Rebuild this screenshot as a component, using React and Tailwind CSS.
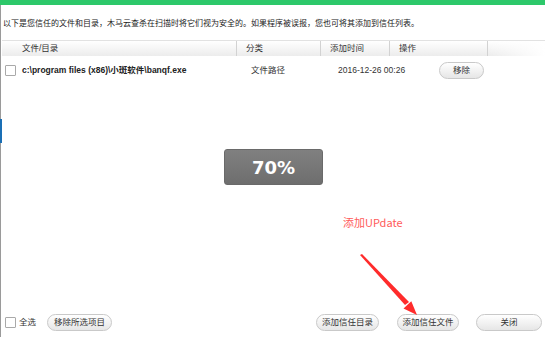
import React from 'react';

function Checkbox() {
  return <span className="w-[11px] h-[11px] border border-[#a9a9a9] bg-white rounded-[1px] shrink-0" />;
}

function PillButton({ children, className = '' }) {
  return (
    <button
      type="button"
      className={`h-[17px] rounded-full border border-[#c9c9c9] bg-gradient-to-b from-white to-[#e6e6e6] text-[8.5px] text-[#333] leading-none flex items-center justify-center ${className}`}
    >
      {children}
    </button>
  );
}

function App() {
  return (
    <div className="w-[545px] h-[337px] bg-white relative overflow-hidden font-['Liberation_Sans','Noto_Sans_CJK_SC',sans-serif] text-[#333]">
      <div className="h-[5px] bg-[#2dc86a]" />
      <div className="flex h-[332px]">
        {/* left window edge */}
        <div className="w-[2px] flex flex-col">
          <div className="h-[114px] w-px bg-[#9a9a9a]" />
          <div className="h-[24px] w-[2px] bg-[#1a6fb5]" />
          <div className="flex-1 w-px bg-[#9a9a9a]" />
        </div>

        <div className="flex-1 flex flex-col">
          <div className="h-[35px] pl-[1px] pt-[3px] flex items-center text-[8px] text-[#222] whitespace-nowrap">
            以下是您信任的文件和目录，木马云查杀在扫描时将它们视为安全的。如果程序被误报，您也可将其添加到信任列表。
          </div>

          {/* table header */}
          <div className="h-[16px] flex text-[8.5px] text-[#333] border-t border-[#e2e2e2] bg-gradient-to-b from-white to-[#ececec]">
            <div className="w-[235px] pl-[20px] flex items-center border-r border-[#d2d2d2]">文件/目录</div>
            <div className="w-[84px] pl-[9px] flex items-center border-r border-[#d2d2d2]">分类</div>
            <div className="w-[69px] pl-[9px] flex items-center border-r border-[#d2d2d2]">添加时间</div>
            <div className="w-[98px] pl-[9px] flex items-center border-r border-[#d2d2d2]">操作</div>
            <div className="flex-1 bg-gradient-to-r from-transparent to-white" />
          </div>

          {/* row */}
          <div className="h-[28px] flex items-center text-[8.5px] whitespace-nowrap">
            <div className="w-[236px] pl-[3px] flex items-center gap-[6px]">
              <Checkbox />
              <span className="font-bold text-[#222]">{"c:\\program files (x86)\\小斑软件\\banqf.exe"}</span>
            </div>
            <div className="w-[84px] pl-[13px]">文件路径</div>
            <div className="w-[69px] pl-[16px] overflow-visible">2016-12-26 00:26</div>
            <div className="pl-[48px]">
              <PillButton className="w-[45px]">移除</PillButton>
            </div>
          </div>

          <div className="flex justify-center mt-[65px]">
            <div className="w-[99px] h-[36px] rounded-[3px] border border-[#6a6a6a] bg-gradient-to-b from-[#808080] to-[#6e6e6e] flex items-center justify-center text-white font-bold text-[18px] font-['DejaVu_Sans',sans-serif]">
              70%
            </div>
          </div>

          <div className="flex-1" />

          {/* bottom bar */}
          <div className="h-[26px] pb-[3px] flex items-center text-[8.5px]">
            <div className="pl-[3px] flex items-center gap-[3px]">
              <Checkbox />
              <span>全选</span>
            </div>
            <PillButton className="w-[65px] ml-[11px]">移除所选项目</PillButton>
            <div className="flex-1" />
            <PillButton className="w-[63px]">添加信任目录</PillButton>
            <PillButton className="w-[62px] ml-[18px]">添加信任文件</PillButton>
            <PillButton className="w-[66px] ml-[17px] mr-[3px]">关闭</PillButton>
          </div>
        </div>
      </div>

      {/* annotation */}
      <div className="absolute left-[343px] top-[214px] text-[11px] text-[#ff5a5a] font-['Noto_Sans_CJK_SC',sans-serif]">
        添加UPdate
      </div>
      <svg className="absolute left-0 top-0 pointer-events-none" width="545" height="337">
        <path d="M360 255 L362 254 L409 302 L405 305 Z" fill="#ff2b2b" />
        <polygon points="417,315 403.5,308.5 411.3,301.2" fill="#ff2b2b" />
      </svg>
    </div>
  );
}

export default App;
